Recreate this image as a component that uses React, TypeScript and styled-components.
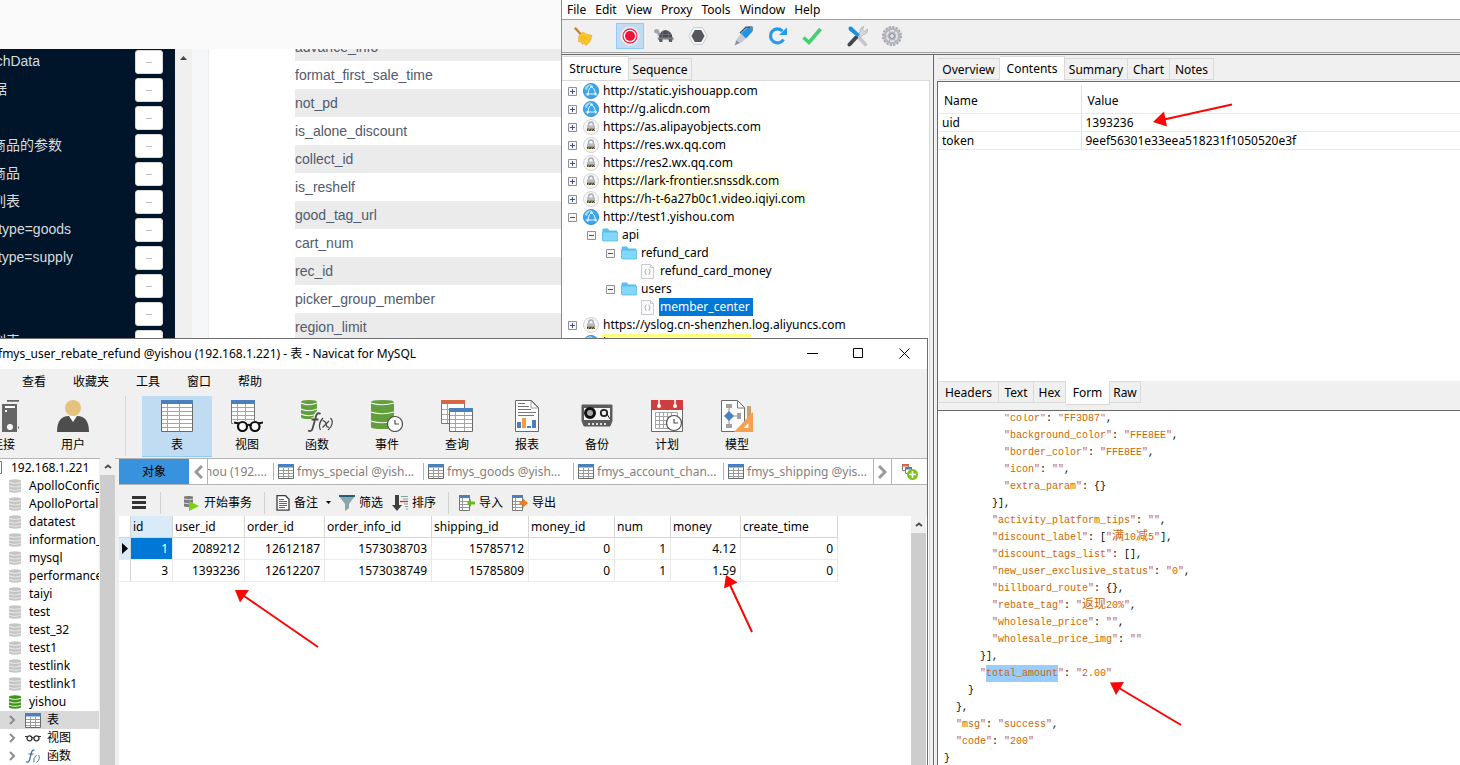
import React from "react";
import styled, { createGlobalStyle, css } from "styled-components";

const GlobalStyle = createGlobalStyle`
  *, *::before, *::after { box-sizing: border-box; }
  html, body, #root { height: 100%; margin: 0; }
  body {
    overflow: hidden;
    background: #fafafa;
    color: #000;
    font-family: "Noto Sans", "Noto Sans CJK SC", sans-serif;
    font-size: 12px;
    line-height: 18px;
  }
  button {
    margin: 0;
    padding: 0;
    border: 0;
    background: none;
    color: inherit;
    font: inherit;
    white-space: nowrap;
  }
  ul { margin: 0; padding: 0; list-style: none; }
  svg { display: block; flex: none; }
`;

const Desktop = styled.div`
  position: relative;
  display: flex;
  height: 100%;
  overflow: hidden;
`;

/* ---------- Browser window with the interface docs ---------- */

const Browser = styled.section`
  display: flex;
  flex-direction: column;
  flex: 0 0 561px;
  min-width: 0;
  overflow: hidden;
  background: #fff;
  font-family: "Liberation Sans", "Noto Sans CJK SC", sans-serif;
  font-size: 14px;
  line-height: 28px;
`;

const BrowserTop = styled.header`
  flex: 0 0 49px;
  background: #fafafa;
`;

const BrowserBody = styled.div`
  display: flex;
  flex: 1;
  min-height: 0;
  overflow: hidden;
`;

const DocMenu = styled.ul`
  flex: 0 0 175px;
  margin-top: -1px;
  background: #001529;
  color: #d9dcdf;
`;

const DocMenuRow = styled.li`
  display: flex;
  align-items: center;
  justify-content: space-between;
  height: 28px;
  padding-right: 12px;
`;

const DocMenuLabel = styled.span<{ $end: number }>`
  display: flex;
  justify-content: flex-end;
  width: ${(p) => p.$end}px;
  height: 28px;
  overflow: hidden;
  line-height: 26px;
  white-space: nowrap;
`;

const CollapseButton = styled.button`
  display: flex;
  align-items: center;
  justify-content: center;
  width: 28px;
  height: 24px;
  border: 1px solid #d9d9d9;
  border-radius: 3px;
  background: #fff;

  &::before {
    content: "";
    width: 6px;
    height: 1px;
    background: #bfbfbf;
  }
`;

const DocScroll = styled.div`
  display: flex;
  justify-content: center;
  flex: 0 0 17px;
  padding-top: 7px;
  background: #f0f0f0;
`;

const DocGutter = styled.div`
  flex: 0 0 17px;
  border-right: 1px solid #ececee;
  background: #f5f7f9;
`;

const FieldList = styled.ul`
  flex: 1;
  margin-top: -16px;
  padding-left: 86px;
  color: #515a6e;
`;

const Field = styled.li`
  height: 28px;
  &:nth-child(odd) { background: #ebebeb; }
`;

const docMenu: [string, number][] = [
  ["chData", 40],
  ["据", 7],
  ["", 0],
  ["商品的参数", 62],
  ["商品", 20],
  ["列表", 20],
  ["type=goods", 71],
  ["type=supply", 73],
  ["", 0],
  ["", 0],
  ["列表", 20],
];

const fields = [
  "advance_info",
  "format_first_sale_time",
  "not_pd",
  "is_alone_discount",
  "collect_id",
  "is_reshelf",
  "good_tag_url",
  "cart_num",
  "rec_id",
  "picker_group_member",
  "region_limit",
];

function DocsBrowser() {
  return (
    <Browser>
      <BrowserTop />
      <BrowserBody>
        <DocMenu>
          {docMenu.map(([label, end], i) => (
            <DocMenuRow key={i}>
              <DocMenuLabel $end={end}>{label}</DocMenuLabel>
              <CollapseButton aria-label="Collapse" />
            </DocMenuRow>
          ))}
        </DocMenu>
        <DocScroll>
          <svg width="7" height="4"><path d="M0 4L3.500 0L7 4z" fill="#444" /></svg>
        </DocScroll>
        <DocGutter />
        <FieldList>
          {fields.map((f) => <Field key={f}>{f}</Field>)}
        </FieldList>
      </BrowserBody>
    </Browser>
  );
}

/* ---------- Proxy window ---------- */

const Proxy = styled.section`
  display: flex;
  flex-direction: column;
  flex: 1;
  min-width: 0;
  border-left: 1px solid #8c8c8c;
  background: #f0f0f0;
`;

const ProxyMenu = styled.nav`
  display: flex;
  gap: 9px;
  flex: 0 0 20px;
  padding-left: 5px;
  border-bottom: 1px solid #a0a0a0;
  background: #fff;
`;

const ProxyTools = styled.div`
  display: flex;
  align-items: center;
  gap: 18px;
  flex: 0 0 33px;
  padding-left: 8px;
  border-bottom: 1px solid #a0a0a0;
`;

const ToolGroup = styled.div`
  display: flex;
  gap: 6px;
`;

const ProxyTool = styled.button<{ $on?: boolean }>`
  display: flex;
  align-items: center;
  justify-content: center;
  width: 28px;
  height: 26px;
  ${(p) => p.$on && css`
    border: 1px solid #90c8f6;
    background: #c0dcf3;
  `}
`;

const ProxyBody = styled.div`
  display: flex;
  flex: 1;
  min-height: 0;
  margin-top: 1px;
  border-top: 1px solid #696969;
`;

const Navigator = styled.div`
  display: flex;
  flex-direction: column;
  flex: 0 0 372px;
  padding-right: 3px;
  border-right: 1px solid #696969;
`;

const Tabs = styled.div`
  display: flex;
  align-items: flex-start;
  flex: none;
  padding: 3px 0 0 1px;
`;

const Tab = styled.button<{ $w: number; $on?: boolean }>`
  width: ${(p) => p.$w}px;
  height: 22px;
  border: 1px solid #d9d9d9;
  border-left-width: 0;
  text-align: center;
  line-height: 21px;
  ${(p) => p.$on && css`
    height: 24px;
    margin-top: -2px;
    border-bottom: 0;
    background: #fff;
  `}
`;

const BottomTab = styled(Tab)`
  ${(p) => p.$on && css`
    margin-top: 0;
    border-top: 0;
    border-bottom: 1px solid #d9d9d9;
    line-height: 24px;
  `}
`;

const Tree = styled.ul`
  flex: 1;
  min-height: 0;
  overflow: hidden;
  padding: 1px 0 0 6px;
  border-top: 1px solid #d9d9d9;
  border-right: 1px solid #d9d9d9;
  background: #fff;
`;

const TreeRow = styled.li<{ $depth: number }>`
  display: flex;
  align-items: center;
  height: 18px;
  padding-left: ${(p) => p.$depth * 19}px;
`;

const TreeText = styled.span<{ $bg?: string; $fg?: string }>`
  margin-left: 3px;
  padding: 0 3px 0 1px;
  background: ${(p) => p.$bg ?? "transparent"};
  color: ${(p) => p.$fg ?? "#000"};
  white-space: nowrap;
`;

const Expander = styled.button<{ $hidden?: boolean }>`
  width: 9px;
  height: 9px;
  margin-right: 6px;
  visibility: ${(p) => (p.$hidden ? "hidden" : "visible")};
`;

const Inspector = styled.div`
  display: flex;
  flex-direction: column;
  flex: 1;
  min-width: 0;
  padding-left: 3px;
`;

const InspectorTabs = styled(Tabs)`
  padding-bottom: 1px;
`;

const Pane = styled.div<{ $h?: number }>`
  display: flex;
  flex-direction: column;
  flex: ${(p) => (p.$h ? `0 0 ${p.$h}px` : "1")};
  min-height: 0;
  overflow: hidden;
  border-top: 1px solid #696969;
  border-left: 1px solid #696969;
  background: #fff;
`;

const PaneTabs = styled(Tabs)`
  height: 29px;
  padding: 0 0 0 1px;
  border-left: 1px solid #696969;
  background: #f0f0f0;
`;

const FormTable = styled.table`
  width: 100%;
  margin-top: 3px;
  border-collapse: collapse;
  table-layout: fixed;

  th, td {
    height: 18px;
    padding: 0 4px;
    border-bottom: 1px solid #e8e8e8;
    text-align: left;
    font-weight: 400;
    line-height: 17px;
  }
  th { height: 28px; padding: 3px 6px 0; }
  th:first-child, td:first-child {
    width: 143px;
    border-right: 1px solid #e0e0e0;
  }
`;

const Code = styled.pre`
  flex: 1;
  min-height: 0;
  overflow: hidden;
  margin: 3px 0 0;
  padding-left: 6px;
  font-family: "Liberation Mono", "Noto Sans CJK SC", monospace;
  font-size: 10px;
  line-height: 17px;
`;

const CodeLines = styled.div`
  margin-top: -4px;
`;

const CodeLine = styled.div`
  height: 17px;
`;

const Str = styled.span`
  color: #cc6600;
`;

const Wide = styled.span`
  font-size: 12px;
`;

const Picked = styled.mark`
  display: inline-block;
  height: 17px;
  background: #99ccff;
  color: inherit;
`;

function BroomIcon() {
  return (
    <svg width="22" height="22" viewBox="0 0 22 22">
      <path d="M1 3.500L2.800 2L8.500 8.500L7 10z" fill="#b9813a" />
      <path d="M6 10.500L10 7Q13 9.500 19 10.500Q18 17 13 20.500L11 18L9.500 19.500L7.500 16.500L5.500 17z" fill="#fcc52c" stroke="#e5a51b" strokeWidth=".6" />
      <path d="M8 12l4 5M10 10.500l5 5" stroke="#e8a91d" strokeWidth=".8" />
    </svg>
  );
}

function RecordIcon() {
  return (
    <svg width="20" height="20" viewBox="0 0 20 20">
      <circle cx="10" cy="10" r="9.200" fill="#fff" stroke="#e8dfe6" />
      <circle cx="10" cy="10" r="7" fill="#fff" stroke="#f22b4c" strokeWidth="1.300" />
      <circle cx="10" cy="10" r="5" fill="#f5123a" />
    </svg>
  );
}

function TurtleIcon() {
  return (
    <svg width="22" height="18" viewBox="0 0 22 18">
      <path d="M1 4.500Q1 2 3.500 2Q6 2 6.500 5L8 10L5 9Q4.500 6.500 3 6.200Q1 6 1 4.500z" fill="#a2a6ad" />
      <path d="M6 11Q6.500 3.500 12.500 3Q18.500 3.500 19.500 11z" fill="#4a4d54" />
      <path d="M10 4l-1 7M15 4l1 7M7 7.500h12" stroke="#6f737b" strokeWidth=".8" />
      <path d="M4.500 10.500h15.500l1 2H5z" fill="#7d8087" />
      <path d="M5.500 12h4v3h-3zM15.500 12h4l-.5 3h-3z" fill="#5b5e65" />
    </svg>
  );
}

function HexIcon() {
  return (
    <svg width="20" height="18" viewBox="0 0 20 18">
      <path d="M5.500 .6h9L19.300 9l-4.800 8.400h-9L.7 9z" fill="#f8f8f9" stroke="#c9ccd2" />
      <path d="M6.800 3h6.400L16.600 9l-3.400 6H6.800L3.400 9z" fill="#53565c" />
    </svg>
  );
}

function PenIcon() {
  return (
    <svg width="22" height="22" viewBox="0 0 22 22">
      <path d="M1.500 20.500L3.500 15L7 18z" fill="#8c9099" />
      <path d="M3.500 14.500L8 8L13.500 13L7.500 18.500z" fill="#c8cbd5" />
      <path d="M8 8.500L15 2Q19 .5 20 2.500Q20.500 5 19 7L13 13.500z" fill="#1f93ea" />
      <path d="M16 1.800Q19 .6 20 2.500Q20.400 4.500 19.200 6.500z" fill="#7e848e" />
      <path d="M7 8L13 2.200h4" fill="none" stroke="#44484f" strokeWidth="1.300" />
    </svg>
  );
}

function RefreshIcon() {
  return (
    <svg width="20" height="20" viewBox="0 0 20 20">
      <path d="M15.500 13.500A7 7 0 1 1 14.500 5" fill="none" stroke="#249af0" strokeWidth="3.200" />
      <path d="M19 1.500V9h-8z" fill="#249af0" />
    </svg>
  );
}

function CheckIcon() {
  return (
    <svg width="20" height="18" viewBox="0 0 20 18">
      <path d="M1.500 10.500L7 15.500L18.500 2" fill="none" stroke="#45cf72" strokeWidth="3.600" />
    </svg>
  );
}

function ToolsIcon() {
  return (
    <svg width="22" height="22" viewBox="0 0 22 22">
      <path d="M18.500 19.500L11 11.500" stroke="#c3c7cd" strokeWidth="3.400" strokeLinecap="round" />
      <path d="M20.500 4Q20.800 9 16.500 9.500L13 12.500L10.500 10L13 7Q12.500 2 17 1.500L15.500 5l2 1.500z" fill="#d5d8dc" stroke="#a5a9b0" strokeWidth=".7" />
      <path d="M2.500 19.500L9 12.500" stroke="#44484e" strokeWidth="4" strokeLinecap="round" />
      <path d="M1.500 2.500Q4 .5 6 3L13 9.500L10.500 12L3.500 6.500Q1 5 1.500 2.500z" fill="#1c8fe5" />
    </svg>
  );
}

function GearIcon() {
  return (
    <svg width="22" height="22" viewBox="0 0 22 22">
      <circle cx="11" cy="11" r="9" fill="none" stroke="#a5a8b1" strokeWidth="2" strokeDasharray="2.400 1.130" />
      <circle cx="11" cy="11" r="8.300" fill="#b2b5bd" />
      <circle cx="11" cy="11" r="5.200" fill="none" stroke="#dfe1e5" strokeWidth="2" strokeDasharray="4.400 1.050" />
      <circle cx="11" cy="11" r="2.400" fill="#e4e5e8" stroke="#8d909a" />
    </svg>
  );
}

function GlobeIcon() {
  return (
    <svg width="16" height="16" viewBox="0 0 16 16">
      <circle cx="8" cy="8" r="7.600" fill="#3ba6ee" stroke="#2a86cf" strokeWidth=".8" />
      <path d="M1.500 6Q3.500 1 9 1Q4.500 3.500 4 7z" fill="#a6dcfb" />
      <path d="M8.500 3.500Q5.500 5 5 10.500M8.500 3.500Q11.500 5 12.500 10.500M2.500 11h11M5 11l-.5 2M12.500 11l.5 1.500" fill="none" stroke="#e5f5ff" />
      <circle cx="8.500" cy="3.500" r="1.200" fill="#e5f5ff" />
      <circle cx="5" cy="11" r="1.200" fill="#e5f5ff" />
      <circle cx="12.500" cy="11" r="1.200" fill="#e5f5ff" />
    </svg>
  );
}

function LockIcon() {
  return (
    <svg width="16" height="16" viewBox="0 0 16 16">
      <circle cx="8" cy="8" r="7.500" fill="#f6f6f8" stroke="#d3d4da" />
      <path d="M5.700 7V5.300a2.300 2.300 0 0 1 4.600 0V7" fill="none" stroke="#a9abb3" strokeWidth="1.300" />
      <path d="M4 6.500h8V11H4z" fill="#b9bbc2" />
      <path d="M4 9.700h8V12H4z" fill="#3f3c30" />
      <path d="M5 12l1.500-2.300M8 12l1.500-2.300M10.500 12L12 9.700" stroke="#d8bd43" />
    </svg>
  );
}

function FolderIcon() {
  return (
    <svg width="16" height="14" viewBox="0 0 16 14">
      <path d="M.5 12.500V1.500Q.5 .5 1.500 .5H6l1.500 2h7.500v10z" fill="#5cc0ec" />
      <path d="M.5 4h15v9H2Q.5 13 .5 12z" fill="#82d8fa" stroke="#4cb4e2" strokeWidth=".7" />
    </svg>
  );
}

function FileIcon() {
  return (
    <svg width="16" height="15" viewBox="0 0 16 15">
      <path d="M1.500 .5h9l3 3v11h-12z" fill="#fbfbfc" stroke="#c9cad3" />
      <path d="M10.500 .5v3h3" fill="none" stroke="#c9cad3" />
      <path d="M6.500 5Q5.300 5 5.500 6.500Q5.500 7.500 4.700 7.500Q5.500 7.500 5.500 9Q5.300 10.500 6.500 10.500M8.500 5Q9.700 5 9.500 6.500Q9.500 7.500 10.300 7.500Q9.500 7.500 9.500 9Q9.700 10.500 8.500 10.500" fill="none" stroke="#a5a7b3" strokeWidth=".9" />
    </svg>
  );
}

function ExpandMark({ open }: { open: boolean }) {
  return (
    <svg width="9" height="9">
      <path d="M.5 .5h8v8h-8z" fill="#f7f7f7" stroke="#919191" />
      <path d={open ? "M2 4.500h5" : "M2 4.500h5M4.500 2v5"} stroke="#3b4fa0" />
    </svg>
  );
}

type NodeKind = "globe" | "lock" | "folder" | "file";
interface TreeNode {
  text: string;
  kind: NodeKind;
  depth?: number;
  open?: boolean;
  bg?: string;
  fg?: string;
}

const nodeIcon: Record<NodeKind, () => React.ReactElement> = {
  globe: GlobeIcon,
  lock: LockIcon,
  folder: FolderIcon,
  file: FileIcon,
};

const nodes: TreeNode[] = [
  { text: "http://static.yishouapp.com", kind: "globe" },
  { text: "http://g.alicdn.com", kind: "globe" },
  { text: "https://as.alipayobjects.com", kind: "lock" },
  { text: "https://res.wx.qq.com", kind: "lock" },
  { text: "https://res2.wx.qq.com", kind: "lock" },
  { text: "https://lark-frontier.snssdk.com", kind: "lock", bg: "#ffffe6" },
  { text: "https://h-t-6a27b0c1.video.iqiyi.com", kind: "lock", bg: "#ffffe6" },
  { text: "http://test1.yishou.com", kind: "globe", open: true },
  { text: "api", kind: "folder", depth: 1, open: true },
  { text: "refund_card", kind: "folder", depth: 2, open: true },
  { text: "refund_card_money", kind: "file", depth: 3 },
  { text: "users", kind: "folder", depth: 2, open: true },
  { text: "member_center", kind: "file", depth: 3, bg: "#0078d7", fg: "#fff" },
  { text: "https://yslog.cn-shenzhen.log.aliyuncs.com", kind: "lock" },
  { text: "http://192.168.1.221:8080", kind: "globe", bg: "#ffff80" },
];

const proxyTools = [
  [BroomIcon],
  [RecordIcon, TurtleIcon, HexIcon],
  [PenIcon, RefreshIcon, CheckIcon],
  [ToolsIcon, GearIcon],
];

const code: [number, string][] = [
  [10, '"color": "FF3D87",'],
  [10, '"background_color": "FFE8EE",'],
  [10, '"border_color": "FFE8EE",'],
  [10, '"icon": "",'],
  [10, '"extra_param": {}'],
  [8, "}],"],
  [8, '"activity_platform_tips": "",'],
  [8, '"discount_label": ["满10减5"],'],
  [8, '"discount_tags_list": [],'],
  [8, '"new_user_exclusive_status": "0",'],
  [8, '"billboard_route": {},'],
  [8, '"rebate_tag": "返现20%",'],
  [8, '"wholesale_price": "",'],
  [8, '"wholesale_price_img": ""'],
  [6, "}],"],
  [6, '"total_amount": "2.00"'],
  [4, "}"],
  [2, "},"],
  [2, '"msg": "success",'],
  [2, '"code": "200"'],
  [0, "}"],
];

function StringToken({ text }: { text: string }) {
  if (text === '"total_amount"') {
    return <Str>"<Picked>total_amount</Picked>"</Str>;
  }
  return (
    <Str>
      {text.split(/([\u4e00-\u9fff]+)/).map((part, i) =>
        i % 2 ? <Wide key={i}>{part}</Wide> : part
      )}
    </Str>
  );
}

function ProxyWindow() {
  return (
    <Proxy>
      <ProxyMenu>
        {["File", "Edit", "View", "Proxy", "Tools", "Window", "Help"].map((m) => (
          <button key={m}>{m}</button>
        ))}
      </ProxyMenu>
      <ProxyTools>
        {proxyTools.map((group, g) => (
          <ToolGroup key={g}>
            {group.map((Icon, i) => (
              <ProxyTool key={i} $on={Icon === RecordIcon} aria-label={Icon.name.replace("Icon", "")}>
                <Icon />
              </ProxyTool>
            ))}
          </ToolGroup>
        ))}
      </ProxyTools>
      <ProxyBody>
        <Navigator>
          <Tabs>
            <Tab $w={66} $on>Structure</Tab>
            <Tab $w={63}>Sequence</Tab>
          </Tabs>
          <Tree>
            {nodes.map((n) => {
              const Icon = nodeIcon[n.kind];
              return (
                <TreeRow key={n.text} $depth={n.depth ?? 0}>
                  <Expander $hidden={n.kind === "file"} aria-label="Toggle">
                    <ExpandMark open={!!n.open} />
                  </Expander>
                  <Icon />
                  <TreeText $bg={n.bg} $fg={n.fg}>{n.text}</TreeText>
                </TreeRow>
              );
            })}
          </Tree>
        </Navigator>
        <Inspector>
          <InspectorTabs>
            <Tab $w={62}>Overview</Tab>
            <Tab $w={65} $on>Contents</Tab>
            <Tab $w={63}>Summary</Tab>
            <Tab $w={42}>Chart</Tab>
            <Tab $w={44}>Notes</Tab>
          </InspectorTabs>
          <Pane $h={300}>
            <FormTable>
              <thead>
                <tr><th>Name</th><th>Value</th></tr>
              </thead>
              <tbody>
                <tr><td>uid</td><td>1393236</td></tr>
                <tr><td>token</td><td>9eef56301e33eea518231f1050520e3f</td></tr>
              </tbody>
            </FormTable>
          </Pane>
          <PaneTabs>
            <BottomTab $w={60}>Headers</BottomTab>
            <BottomTab $w={35}>Text</BottomTab>
            <BottomTab $w={32}>Hex</BottomTab>
            <BottomTab $w={44} $on>Form</BottomTab>
            <BottomTab $w={31}>Raw</BottomTab>
          </PaneTabs>
          <Pane>
            <Code>
              <CodeLines>
                {code.map(([indent, text], i) => (
                  <CodeLine key={i}>
                    {" ".repeat(indent)}
                    {text.split(/("[^"]*")/).map((t, j) =>
                      j % 2 ? <StringToken key={j} text={t} /> : t
                    )}
                  </CodeLine>
                ))}
              </CodeLines>
            </Code>
          </Pane>
        </Inspector>
      </ProxyBody>
    </Proxy>
  );
}

/* ---------- Database window ---------- */

const Database = styled.section`
  position: absolute;
  top: 338px;
  bottom: 0;
  left: 0;
  display: flex;
  flex-direction: column;
  width: 928px;
  border-top: 1px solid #6e6e6e;
  border-right: 1px solid #6e6e6e;
  background: #f0f0f0;
`;

const TitleBar = styled.header`
  display: flex;
  justify-content: space-between;
  flex: 0 0 30px;
  overflow: hidden;
  background: #fff;
  line-height: 29px;
  white-space: nowrap;
`;

const TitleText = styled.div`
  margin-left: -2px;
`;

const WindowButton = styled.button`
  display: inline-flex;
  align-items: center;
  justify-content: center;
  width: 46px;
  height: 29px;
`;

const DbMenu = styled.nav`
  display: flex;
  gap: 27px;
  flex: 0 0 25px;
  padding: 1px 0 0 22px;
  line-height: 24px;
`;

const BigTools = styled.div`
  display: flex;
  flex: 0 0 65px;
  margin-left: -32px;
  padding-top: 2px;
  border-bottom: 1px solid #b4b4b4;
`;

const BigTool = styled.button<{ $on?: boolean }>`
  display: flex;
  flex-direction: column;
  align-items: center;
  gap: 5px;
  width: 70px;
  height: 61px;
  padding-top: 4px;
  line-height: 16px;
  ${(p) => p.$on && css`
    border-bottom: 1px solid #90c8f6;
    background: #c0dcf3;
  `}
`;

const BigDivider = styled.div`
  width: 1px;
  margin: 0 16px 2px 17px;
  background: #d5d5d5;
`;

const DbBody = styled.div`
  display: flex;
  flex: 1;
  min-height: 0;
  margin-top: -1px;
`;

const Objects = styled.ul`
  flex: 0 0 99px;
  overflow: hidden;
  border-top: 1px solid #b4b4b4;
  background: #fff;
`;

const ObjectRow = styled.li<{ $kind: "server" | "db" | "child"; $on?: boolean }>`
  display: flex;
  align-items: center;
  gap: ${(p) => (p.$kind === "child" ? 6 : 8)}px;
  height: 18px;
  padding-left: ${(p) => (p.$kind === "server" ? 0 : 9)}px;
  background: ${(p) => (p.$on ? "#d9d9d9" : "transparent")};
  line-height: 16px;
  white-space: nowrap;
`;

const Chevron = styled.span`
  width: 10px;
`;

const ScrollTrack = styled.div`
  display: flex;
  flex-direction: column;
  flex: 0 0 15px;
  margin-left: 1px;
  background: #cdcdcd;
`;

const ScrollButton = styled.button`
  display: flex;
  align-items: center;
  justify-content: center;
  height: 17px;
  background: #f0f0f0;
`;

const Work = styled.div`
  display: flex;
  flex-direction: column;
  flex: 1;
  min-width: 0;
  margin-left: 4px;
`;

const ObjectTabs = styled.div`
  display: flex;
  flex: 0 0 27px;
  border-top: 1px solid #b4b4b4;
  border-bottom: 1px solid #b4b4b4;
  background: #fff;
  color: #808080;
`;

const MainTab = styled.button`
  width: 70px;
  background: #3992de;
  color: #000;
`;

const TabArrow = styled.button`
  display: flex;
  align-items: center;
  justify-content: center;
  width: 19px;
  border-right: 1px solid #b4b4b4;
`;

const NextArrow = styled(TabArrow)`
  border-left: 1px solid #b4b4b4;
`;

const TabTail = styled.button`
  display: flex;
  align-items: center;
  justify-content: flex-end;
  width: 65px;
  padding-right: 6px;
  overflow: hidden;
`;

const ObjectTab = styled.button`
  display: flex;
  align-items: center;
  gap: 3px;
  width: 150px;
  padding: 0 0 0 5px;
  overflow: hidden;

  &::before {
    content: "";
    width: 1px;
    height: 17px;
    margin-left: -5px;
    margin-right: 1px;
    background: #b4b4b4;
  }
`;

const NewTab = styled.button`
  display: flex;
  align-items: center;
  justify-content: center;
  flex: 1;
`;

const GridTools = styled.div`
  display: flex;
  align-items: center;
  flex: 0 0 31px;
  padding: 4px 0 0 13px;
`;

const GridTool = styled.button<{ $gap: number }>`
  display: flex;
  align-items: center;
  gap: 4px;
  height: 24px;
  margin-right: ${(p) => p.$gap}px;
`;

const ToolDivider = styled.div<{ $gap: number }>`
  width: 1px;
  height: 22px;
  margin-right: ${(p) => p.$gap}px;
  background: #d0d0d0;
`;

const GridArea = styled.div`
  display: flex;
  justify-content: space-between;
  flex: 1;
  min-height: 0;
  padding-right: 1px;
  background: #fff;
`;

const Grid = styled.table`
  align-self: flex-start;
  width: 719px;
  border-collapse: separate;
  border-spacing: 0;
  table-layout: fixed;

  th, td {
    height: 22px;
    padding: 0 4px 0 2px;
    border-right: 1px solid #e8e8e8;
    border-bottom: 1px solid #ececec;
    font-weight: 400;
    line-height: 20px;
    text-align: right;
  }
  thead th { border-color: #d5d5d5; text-align: left; }
  th:first-child { padding: 0; border-right-color: #d5d5d5; }
`;

const IdHead = styled.th`
  background: #d9ebf9;
`;

const CurrentMark = styled.th`
  background: #d9ebf9;
`;

const PickedCell = styled.td`
  background: #0078d7;
  color: #fff;
`;

function DbIcon({ color = "#c4c4c4", light = "#e6e6e6" }: { color?: string; light?: string }) {
  return (
    <svg width="12" height="14" viewBox="0 0 12 14">
      <path d="M0 2Q0 .3 6 .3T12 2v10Q12 13.700 6 13.700T0 12z" fill={color} />
      <path d="M0 3.300Q6 5.600 12 3.300M0 6.800Q6 9.100 12 6.800M0 10.200Q6 12.500 12 10.200" fill="none" stroke={light} strokeWidth="1.100" />
    </svg>
  );
}

function SmallTable() {
  return (
    <svg width="16" height="15">
      <path d="M.5 .5h15v14H.5z" fill="#fff" stroke="#6a6a6a" />
      <path d="M1 6.500h14M1 9.500h14M1 12.500h14M5.500 4v10M10.500 4v10" stroke="#9a9a9a" />
      <path d="M0 0h16v3.500H0z" fill="#4a80bb" />
    </svg>
  );
}

function Glasses() {
  return (
    <svg width="16" height="8" viewBox="0 0 16 8">
      <circle cx="4.500" cy="4.300" r="2.500" fill="none" stroke="#333" strokeWidth="1.300" />
      <circle cx="11.500" cy="4.300" r="2.500" fill="none" stroke="#333" strokeWidth="1.300" />
      <path d="M0 2.500h2.500M7 4Q8 3 9 4M13.500 2.500H16" fill="none" stroke="#333" />
    </svg>
  );
}

function FnSmall() {
  return (
    <svg width="16" height="14" viewBox="0 0 16 14">
      <path d="M9.500 1.500Q7.500 0 6.500 3.500L4.500 11Q3.500 14 1 12.700M3.500 5h5" fill="none" stroke="#3a6a9c" strokeWidth="1.200" />
      <path d="M11.500 6Q7.500 9.500 9 13.500M13.500 6Q16 9.500 11.500 13.500" fill="none" stroke="#3a6a9c" strokeWidth=".9" />
    </svg>
  );
}

function Angle({ dir = "right", w = 5, color = "#8c8c8c", bold = 2 }: { dir?: "right" | "left" | "up"; w?: number; color?: string; bold?: number }) {
  const h = w * 2;
  if (dir === "up") {
    return (
      <svg width={h} height={w + 2} viewBox={`0 0 ${h} ${w + 2}`}>
        <path d={`M1 ${w}L${w} 1.500L${h - 1} ${w}`} fill="none" stroke={color} strokeWidth={bold} />
      </svg>
    );
  }
  return (
    <svg width={w + 2} height={h} viewBox={`0 0 ${w + 2} ${h}`}>
      <path d={dir === "right" ? `M1 1L${w} ${w}L1 ${h - 1}` : `M${w + 1} 1L2 ${w}L${w + 1} ${h - 1}`} fill="none" stroke={color} strokeWidth={bold} />
    </svg>
  );
}

const frame = { width: 32, height: 32, viewBox: "0 0 32 32" };

function ServerIcon() {
  return (
    <svg {...frame}>
      <path d="M20 .8h14v26.700h-3" fill="none" stroke="#666" strokeWidth="1.800" />
      <path d="M15 4h15v28H15z" fill="#666" />
      <path d="M18 7h10M18 11h2" stroke="#fff" strokeWidth="2" />
      <circle cx="23" cy="27" r="3" fill="#fff" />
    </svg>
  );
}

function UserIcon() {
  return (
    <svg {...frame}>
      <path d="M0 32Q0 16 12 16h8Q32 16 32 32z" fill="#4d4d4d" />
      <path d="M12 16h8l-4 6z" fill="#fff" />
      <circle cx="16" cy="8" r="8" fill="#e6c27f" />
    </svg>
  );
}

function TableIcon() {
  return (
    <svg {...frame}>
      <path d="M.5 .5h31v31H.5z" fill="#fff" stroke="#6a6a6a" />
      <path d="M1 7.500h30M1 11.500h30M1 15.500h30M1 19.500h30M1 23.500h30M1 27.500h30M6.500 4v27M18.500 4v27" stroke="#a5a5a5" />
      <path d="M0 0h32v4H0z" fill="#4a80bb" />
    </svg>
  );
}

function ViewIcon() {
  return (
    <svg {...frame}>
      <path d="M.5 .5h23v23H.5z" fill="#fff" stroke="#777" />
      <path d="M1 7.500h22M1 11.500h22M1 15.500h22M1 19.500h22M6.500 4v19M14.500 4v19" stroke="#a5a5a5" />
      <path d="M0 0h24v4H0z" fill="#4a80bb" />
      <path d="M2 21h30v11H2z" fill="#f0f0f0" />
      <circle cx="11.500" cy="26.500" r="4.500" fill="#fff" stroke="#111" strokeWidth="2.200" />
      <circle cx="24" cy="26.500" r="4.500" fill="#fff" stroke="#111" strokeWidth="2.200" />
      <path d="M3 22.500L8 23.500M15.500 26Q18 23.500 20 26M27 23.500L32 22.500" fill="none" stroke="#111" strokeWidth="2" />
    </svg>
  );
}

function BarrelShape({ w, h }: { w: number; h: number }) {
  const rings = h > 20 ? [3, 12, 21] : [3, 9, 14];
  return (
    <>
      <path d={`M0 2Q0 0 ${w / 2} 0T${w} 2V${h - 2}Q${w} ${h} ${w / 2} ${h}T0 ${h - 2}z`} fill="#629e3c" />
      {rings.map((y) => (
        <path key={y} d={`M0 ${y}Q${w / 2} ${y + 3.5} ${w} ${y}`} fill="none" stroke="#f0f6ec" strokeWidth="1.200" />
      ))}
    </>
  );
}

function FunctionIcon() {
  return (
    <svg {...frame}>
      <BarrelShape w={16} h={19} />
      <path d="M19.500 14Q16 10 14.500 18L12 27Q11 32.500 7 30.500M10.500 19.500h7" fill="none" stroke="#f0f0f0" strokeWidth="4" />
      <path d="M19.500 14Q16 11 14.500 18L12 27Q11 32.500 7 30.500M10.500 19.500h7" fill="none" stroke="#4a4a4a" strokeWidth="1.800" />
      <path d="M22 18Q16.500 24 19.500 30M29.500 18Q34 23 27 30M21.500 21Q24 20 25 24T28 27M28 21L21.500 27.500" fill="none" stroke="#4a4a4a" strokeWidth="1.200" />
    </svg>
  );
}

function ClockShape({ cx, cy }: { cx: number; cy: number }) {
  return (
    <>
      <circle cx={cx} cy={cy} r="7.500" fill="#fff" stroke="#4d4d4d" strokeWidth="1.200" />
      <path d={`M${cx} ${cy - 4}V${cy}h4`} fill="none" stroke="#4d4d4d" strokeWidth="1.200" />
    </>
  );
}

function EventIcon() {
  return (
    <svg {...frame}>
      <BarrelShape w={23} h={29} />
      <ClockShape cx={24} cy={24} />
    </svg>
  );
}

function QueryIcon() {
  return (
    <svg {...frame}>
      <path d="M.5 .5h23v23H.5z" fill="#fff" stroke="#777" />
      <path d="M1 9.500h22M1 14.500h22M1 19.500h22M6.500 4v19" stroke="#a5a5a5" />
      <path d="M0 0h24v4H0z" fill="#d96545" />
      <path d="M8.500 8.500h23v23h-23z" fill="#fff" stroke="#6a6a6a" />
      <path d="M9 15.500h22M9 19.500h22M9 23.500h22M9 27.500h22M14.500 12v19M23.500 12v19" stroke="#a5a5a5" />
      <path d="M8 8h24v4H8z" fill="#4a80bb" />
    </svg>
  );
}

function ReportIcon() {
  return (
    <svg {...frame}>
      <path d="M4.500 .5h16l7 7v24h-23z" fill="#fff" stroke="#6a6a6a" />
      <path d="M20 1v7h7z" fill="#fff" stroke="#888" strokeWidth=".8" />
      <path d="M7 3.500h7M7 6.500h11M7 9.500h13M7 12.500h18M7 15.500h16" stroke="#777" />
      <path d="M6 22h4v6H6zM16 26h4v2h-4zM21 20h4v8h-4z" fill="#4a80bb" />
      <path d="M11 18h4v10h-4z" fill="#f59a45" />
    </svg>
  );
}

function BackupIcon() {
  return (
    <svg {...frame}>
      <path d="M1 5h30v16l-2 5H3l-2-5z" fill="#5c5c5c" stroke="#5c5c5c" />
      <path d="M3 8h26v12H3z" fill="#f5f5f5" />
      <circle cx="9" cy="13" r="4.500" fill="#aaa" stroke="#111" strokeWidth="3" />
      <circle cx="23" cy="13" r="3.200" fill="#eee" stroke="#222" strokeWidth="1.800" />
      <path d="M26 14l3 5" stroke="#222" />
      <path d="M7 24h18" stroke="#ddd" strokeWidth="2" strokeDasharray="2 2" />
    </svg>
  );
}

function ScheduleIcon() {
  return (
    <svg {...frame}>
      <path d="M.5 .5h31v31H.5z" fill="#fff" stroke="#6a6a6a" />
      <path d="M0 0h32v10H0z" fill="#cf3d3d" />
      <path d="M8 0v6M24 0v6" stroke="#fff" strokeWidth="1.500" />
      <circle cx="8" cy="6" r="2" fill="#fff" />
      <circle cx="24" cy="6" r="2" fill="#fff" />
      <path d="M4.500 12.500h22v16h-22zM4.500 16.500h22M4.500 20.500h22M4.500 24.500h22M8.500 12.500v16M12.500 12.500v16M16.500 12.500v16M20.500 12.500v16" fill="none" stroke="#a5a5a5" />
      <ClockShape cx={23} cy={23} />
    </svg>
  );
}

function ModelIcon() {
  return (
    <svg {...frame}>
      <path d="M.5 .5h16l7 7v24H.5z" fill="#fff" stroke="#6a6a6a" />
      <path d="M16.500 .5v7.500h7" fill="none" stroke="#777" />
      <path d="M8 6v20M8 16h10" stroke="#999" />
      <path d="M5 4h6v4H5zM5 24h6v4H5zM16 13h4v6h-4z" fill="#a0a0a0" />
      <path d="M8 11l5 5-5 5-5-5z" fill="#4a80bb" />
      <path d="M26 6h4v20h-4z" fill="#c9a36f" />
      <path d="M32 12v20H13z" fill="#f9a04e" />
      <path d="M27.500 23v5h-5z" fill="#fff" />
    </svg>
  );
}

function MenuIcon() {
  return <svg width="14" height="13"><path d="M0 1.500h14M0 6.500h14M0 11.500h14" stroke="#333" strokeWidth="3" /></svg>;
}

function StartIcon() {
  return (
    <svg width="16" height="16" viewBox="0 0 16 16">
      <path d="M0 2Q0 1 4.500 1T9 2v9Q9 12 4.500 12T0 11z" fill="#7a7a7a" />
      <path d="M0 4Q4.500 5.500 9 4M0 8Q4.500 9.500 9 8" fill="none" stroke="#ddd" />
      <path d="M5 6l10 5-10 5z" fill="#7bd010" />
    </svg>
  );
}

function NoteIcon() {
  return (
    <svg width="14" height="16" viewBox="0 0 14 16">
      <path d="M1 .7h8.500L13 4.200v11H1z" fill="#fff" stroke="#3c3c3c" strokeWidth="1.300" />
      <path d="M3 4.500h5M3 6.500h8M3 8.500h8M3 10.500h8M3 12.500h6" stroke="#2b7893" />
    </svg>
  );
}

function FilterIcon() {
  return (
    <svg width="16" height="16" viewBox="0 0 16 16">
      <path d="M0 1h16L10 9v4l-4 3V9z" fill="#8ba5ae" />
      <path d="M0 0h16v2H0z" fill="#265f78" />
    </svg>
  );
}

function SortIcon() {
  return (
    <svg width="16" height="16" viewBox="0 0 16 16">
      <path d="M3 0h4v10h3l-5 6-5-6h3z" fill="#3f3f3f" />
      <path d="M9 1.500h7M11 4h5M12 9h4M13 11.500h3M14 14h2" stroke="#7ea79c" />
      <path d="M8 6.500h8" stroke="#e2234d" strokeWidth="1.300" />
    </svg>
  );
}

function TransferIcon({ head, arrow, path }: { head: string; arrow: string; path: string }) {
  return (
    <svg width="16" height="16" viewBox="0 0 16 16">
      <path d="M.5 .5h10v15H.5z" fill="#fff" stroke="#777" />
      <path d="M1 6.500h9M1 9.500h9M1 12.500h9M3.500 3v12" stroke="#999" />
      <path d="M0 0h11v3H0z" fill={head} />
      <path d={path} fill={arrow} />
    </svg>
  );
}

function NewTabIcon() {
  return (
    <svg width="16" height="16" viewBox="0 0 16 16">
      <path d="M.5 .5h6v6h-6z" fill="#fff" stroke="#777" />
      <path d="M0 0h7v2.500H0z" fill="#d96545" />
      <path d="M3.500 4.500h6v5h-6z" fill="#fff" stroke="#777" />
      <path d="M3 3h7v2.500H3z" fill="#4a80bb" />
      <circle cx="10.500" cy="10.500" r="5.500" fill="#7ac41a" />
      <path d="M7 10.500h7M10.500 7v7" stroke="#fff" strokeWidth="1.600" />
    </svg>
  );
}

const bigTools: [string, () => React.ReactElement][] = [
  ["表", TableIcon],
  ["视图", ViewIcon],
  ["函数", FunctionIcon],
  ["事件", EventIcon],
  ["查询", QueryIcon],
  ["报表", ReportIcon],
  ["备份", BackupIcon],
  ["计划", ScheduleIcon],
  ["模型", ModelIcon],
];

const schemas = [
  "ApolloConfig", "ApolloPortal", "datatest", "information_", "mysql",
  "performance", "taiyi", "test", "test_32", "test1", "testlink", "testlink1",
];

const columns: [string, number][] = [
  ["id", 42], ["user_id", 72], ["order_id", 80], ["order_info_id", 107],
  ["shipping_id", 97], ["money_id", 86], ["num", 56], ["money", 70], ["create_time", 97],
];

const rows = [
  ["1", "2089212", "12612187", "1573038703", "15785712", "0", "1", "4.12", "0"],
  ["3", "1393236", "12612207", "1573038749", "15785809", "0", "1", "1.59", "0"],
];

function DatabaseWindow() {
  return (
    <Database>
      <TitleBar>
        <TitleText>fmys_user_rebate_refund @yishou (192.168.1.221) - 表 - Navicat for MySQL</TitleText>
        <div>
          <WindowButton aria-label="Minimize">
            <svg width="11" height="11"><path d="M0 5.500h11" stroke="#000" /></svg>
          </WindowButton>
          <WindowButton aria-label="Maximize">
            <svg width="11" height="11"><path d="M.5 .5h9v9h-9z" fill="none" stroke="#000" /></svg>
          </WindowButton>
          <WindowButton aria-label="Close">
            <svg width="11" height="11"><path d="M.5 .5l10 10M10.500 .5l-10 10" stroke="#000" /></svg>
          </WindowButton>
        </div>
      </TitleBar>
      <DbMenu>
        {["查看", "收藏夹", "工具", "窗口", "帮助"].map((m) => <button key={m}>{m}</button>)}
      </DbMenu>
      <BigTools>
        <BigTool><ServerIcon />连接</BigTool>
        <BigTool><UserIcon />用户</BigTool>
        <BigDivider />
        {bigTools.map(([label, Icon]) => (
          <BigTool key={label} $on={label === "表"}><Icon />{label}</BigTool>
        ))}
      </BigTools>
      <DbBody>
        <Objects>
          <ObjectRow $kind="server">
            <svg width="3" height="14"><path d="M0 .5h1.500v12H0" fill="none" stroke="#4f9a2a" /></svg>
            192.168.1.221
          </ObjectRow>
          {schemas.map((s) => (
            <ObjectRow key={s} $kind="db"><DbIcon />{s}</ObjectRow>
          ))}
          <ObjectRow $kind="db"><DbIcon color="#3f9416" light="#cfe6c2" />yishou</ObjectRow>
          <ObjectRow $kind="child" $on><Chevron><Angle /></Chevron><SmallTable />表</ObjectRow>
          <ObjectRow $kind="child"><Chevron><Angle /></Chevron><Glasses />视图</ObjectRow>
          <ObjectRow $kind="child"><Chevron><Angle /></Chevron><FnSmall />函数</ObjectRow>
        </Objects>
        <ScrollTrack>
          <ScrollButton aria-label="Scroll up"><Angle dir="up" w={4} color="#505050" /></ScrollButton>
        </ScrollTrack>
        <Work>
          <ObjectTabs>
            <MainTab>对象</MainTab>
            <TabArrow aria-label="Previous tabs"><Angle dir="left" w={7} color="#9a9a9a" bold={3} /></TabArrow>
            <TabTail>hou (192....</TabTail>
            {["fmys_special @yish...", "fmys_goods @yish...", "fmys_account_chan...", "fmys_shipping @yis..."].map((t) => (
              <ObjectTab key={t}><SmallTable />{t}</ObjectTab>
            ))}
            <NextArrow aria-label="Next tabs"><Angle w={7} color="#9a9a9a" bold={3} /></NextArrow>
            <NewTab aria-label="New tab"><NewTabIcon /></NewTab>
          </ObjectTabs>
          <GridTools>
            <GridTool $gap={14} aria-label="Menu"><MenuIcon /></GridTool>
            <ToolDivider $gap={23} />
            <GridTool $gap={12}><StartIcon />开始事务</GridTool>
            <ToolDivider $gap={11} />
            <GridTool $gap={8}><NoteIcon />备注</GridTool>
            <GridTool $gap={8} aria-label="More"><svg width="5" height="3"><path d="M0 0h5L2.500 3z" /></svg></GridTool>
            <GridTool $gap={9}><FilterIcon />筛选</GridTool>
            <GridTool $gap={12}><SortIcon />排序</GridTool>
            <ToolDivider $gap={10} />
            <GridTool $gap={9}><TransferIcon head="#4a80bb" arrow="#6ab723" path="M8 8l4-4v2.500h4v3h-4V12z" />导入</GridTool>
            <GridTool $gap={0}><TransferIcon head="#4a80bb" arrow="#fb7c14" path="M16 8l-5-4.500v3H7.500v3H11v3z" />导出</GridTool>
          </GridTools>
          <GridArea>
            <Grid>
              <colgroup>
                <col width={12} />
                {columns.map(([c, w]) => <col key={c} width={w} />)}
              </colgroup>
              <thead>
                <tr>
                  <th />
                  {columns.map(([c]) => (c === "id" ? <IdHead key={c}>{c}</IdHead> : <th key={c}>{c}</th>))}
                </tr>
              </thead>
              <tbody>
                {rows.map((r, i) => (
                  <tr key={i}>
                    {i === 0 ? (
                      <CurrentMark><svg width="10" height="11" viewBox="0 0 10 11"><path d="M3 0l6 5.500L3 11z" /></svg></CurrentMark>
                    ) : <th />}
                    {r.map((v, j) => (i === 0 && j === 0 ? <PickedCell key={j}>{v}</PickedCell> : <td key={j}>{v}</td>))}
                  </tr>
                ))}
              </tbody>
            </Grid>
            <ScrollTrack>
              <ScrollButton aria-label="Scroll up"><Angle dir="up" w={4} color="#505050" /></ScrollButton>
            </ScrollTrack>
          </GridArea>
        </Work>
      </DbBody>
    </Database>
  );
}

/* ---------- Red pointer arrows over the windows ---------- */

const Marks = styled.svg`
  position: absolute;
  top: 0;
  left: 0;
  width: 100%;
  height: 100%;
  pointer-events: none;
`;

function Arrows() {
  return (
    <Marks fill="#fb0505" stroke="none">
      <path d="M1153 122L1164 111.500L1167 126.500z" />
      <path d="M235 590L249 590L240 602.500z" />
      <path d="M726 575L737.500 582.500L724 588.500z" />
      <path d="M1110 682.500L1124 682L1116 695z" />
      <path d="M1164 119.500L1232 104.500M244 596L318 647M730 585L752 632M1119 688L1181 725" stroke="#fb0505" strokeWidth="2" />
    </Marks>
  );
}

export default function App() {
  return (
    <Desktop>
      <GlobalStyle />
      <DocsBrowser />
      <ProxyWindow />
      <DatabaseWindow />
      <Arrows />
    </Desktop>
  );
}
